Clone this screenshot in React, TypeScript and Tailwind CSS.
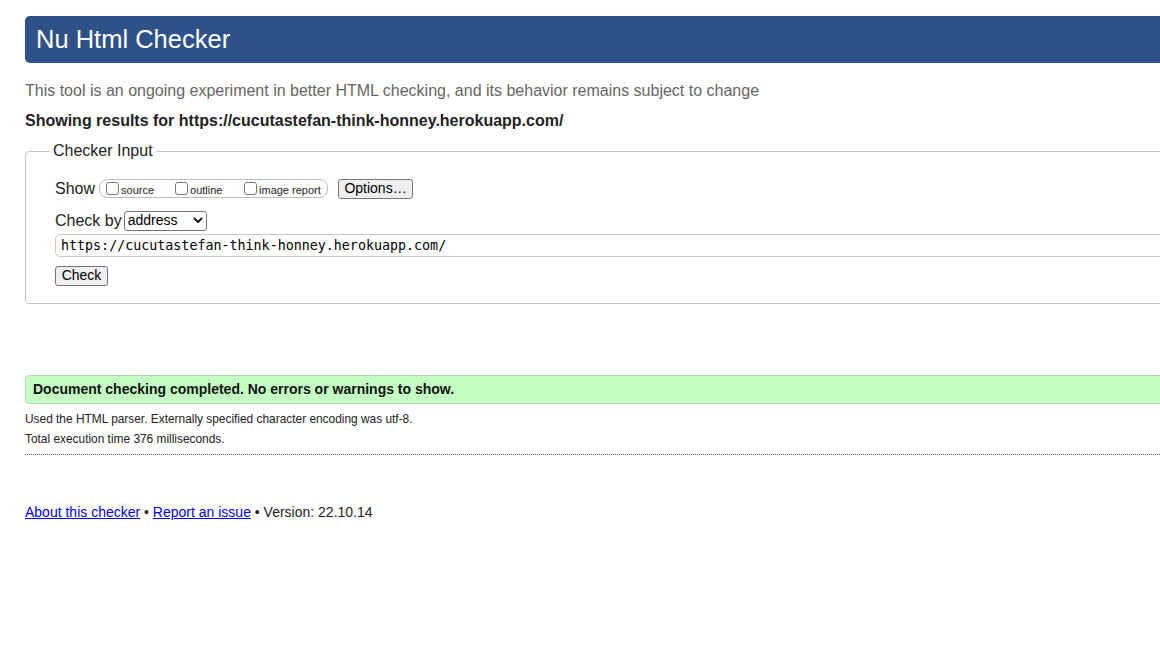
import React from 'react';

const sans = { fontFamily: '"Liberation Sans", Arial, sans-serif' };

function Checkbox({ label }: { label: string }) {
  return (
    <span className="flex items-center">
      <span className="inline-block w-[13px] h-[13px] border border-[#767676] rounded-[3px] bg-white mr-[2px]" />
      <span className="text-[11px] text-[#222] leading-none mt-[3px]">{label}</span>
    </span>
  );
}

function Chevron() {
  return (
    <svg width="10" height="7" viewBox="0 0 10 7" className="ml-auto">
      <path d="M1.5 1.5 L5 5 L8.5 1.5" fill="none" stroke="#111" strokeWidth="1.8" strokeLinecap="round" strokeLinejoin="round" />
    </svg>
  );
}

export default function App() {
  return (
    <div className="w-[1160px] h-[671px] overflow-hidden bg-white text-[#222]" style={sans}>
      <div className="w-[1320px] pl-[25px] pt-[16px]">
        {/* ── Header ── */}
        <h1 className="h-[47px] bg-[#2e5288] rounded-[5px] text-white text-[25.5px] leading-[47px] pl-[11px] font-normal">
          Nu Html Checker
        </h1>

        <p className="mt-[18px] text-[16px] leading-[20px] text-[#666]">
          This tool is an ongoing experiment in better HTML checking, and its behavior remains subject to change
        </p>
        <p className="mt-[10px] text-[16px] leading-[20px] font-bold text-[#222]">
          Showing results for https://cucutastefan-think-honney.herokuapp.com/
        </p>

        {/* ── Checker Input ── */}
        <fieldset className="mt-[11px] border border-[#c4c4c4] rounded-[4px] pl-[29px] pb-[16px] pt-[19px]">
          <legend className="-ml-[5px] px-[3px] text-[16px] leading-[18px] text-[#222]">Checker Input</legend>

          <div className="flex items-center h-[19px]">
            <span className="text-[16px] mr-[4px]">Show</span>
            <span className="flex items-center h-[19px] w-[229px] border border-[#bdbdbd] rounded-[8px] pl-[6px]">
              <span className="w-[69px]"><Checkbox label="source" /></span>
              <span className="w-[69px]"><Checkbox label="outline" /></span>
              <Checkbox label="image report" />
            </span>
            <span className="ml-[10px] h-[20px] w-[75px] flex items-center justify-center bg-[#efefef] border border-[#767676] rounded-[3px] text-[14px] text-black">
              Options…
            </span>
          </div>

          <div className="flex items-center mt-[13px] h-[19px]">
            <span className="text-[16px] mr-[2px]">Check by</span>
            <span className="flex items-center h-[20px] w-[83px] border border-[#767676] rounded-[3px] pl-[3px] pr-[3px] text-[14px] text-black bg-white">
              address
              <Chevron />
            </span>
          </div>

          <div
            className="mt-[4px] h-[23px] border border-[#c8c8c8] rounded-[5px] flex items-center pl-[5px] text-[13.33px] text-black"
            style={{ fontFamily: '"DejaVu Sans Mono", "Liberation Mono", monospace' }}
          >
            https://cucutastefan-think-honney.herokuapp.com/
          </div>

          <div className="mt-[6px]">
            <span className="inline-flex h-[20px] w-[53px] items-center justify-center bg-[#efefef] border border-[#767676] rounded-[3px] text-[14px] text-black">
              Check
            </span>
          </div>
        </fieldset>

        {/* ── Results ── */}
        <p className="mt-[71px] h-[29px] bg-[#c3fdc3] border border-[#b4d8b4] rounded-[4px] pl-[7px] flex items-center text-[14px] font-bold text-[#111]">
          Document checking completed. No errors or warnings to show.
        </p>
        <p className="mt-[8px] text-[11.9px] leading-[14px]">
          Used the HTML parser. Externally specified character encoding was utf-8.
        </p>
        <p className="mt-[6px] text-[11.9px] leading-[14px]">Total execution time 376 milliseconds.</p>
        <div className="mt-[8px] border-t border-dotted border-[#555]" />

        {/* ── Footer ── */}
        <p className="mt-[47px] text-[14px] text-[#222]">
          <a className="text-[#0000ee] underline">About this checker</a> •{' '}
          <a className="text-[#0000ee] underline">Report an issue</a> • Version: 22.10.14
        </p>
      </div>
    </div>
  );
}
